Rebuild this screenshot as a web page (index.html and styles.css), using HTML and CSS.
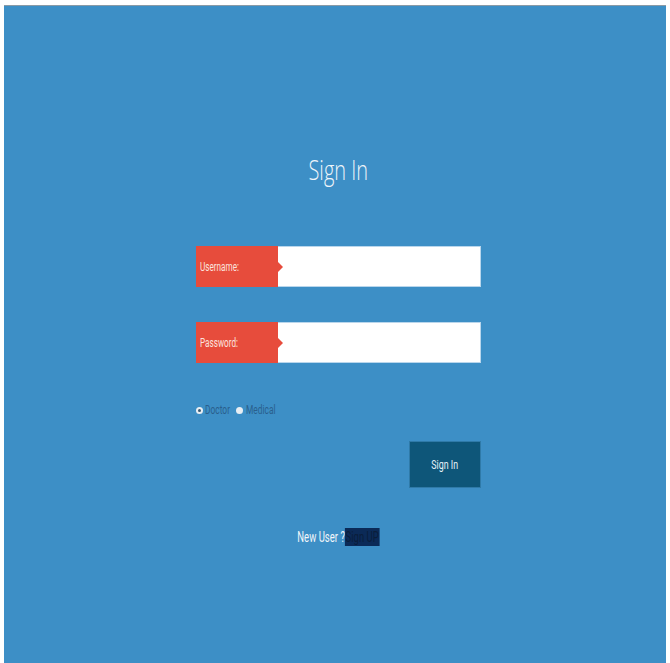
FILE: index.html
```html
<!DOCTYPE html>
<html>
<head>
<meta charset="utf-8">
<title>Sign In</title>
<link rel="stylesheet" href="styles.css">
</head>
<body>
<div class="page">
  <div class="panel">
    <h1 class="title">Sign In</h1>
    <form class="form">
      <div class="field">
        <label class="field-label" for="user"><span class="label-text">Username:</span></label>
        <input class="field-input" id="user" type="text">
      </div>
      <div class="field">
        <label class="field-label" for="pass"><span class="label-text">Password:</span></label>
        <input class="field-input" id="pass" type="password">
      </div>
      <div class="roles">
        <label class="role"><span class="radio checked"></span><span class="role-text role-doctor">Doctor</span></label>
        <label class="role"><span class="radio"></span><span class="role-text role-medical">Medical</span></label>
      </div>
      <div class="actions">
        <button class="submit" type="button"><span class="submit-text">Sign In</span></button>
      </div>
    </form>
    <p class="signup">New User ?<a class="signup-link" href="#">Sign UP</a></p>
  </div>
</div>
</body>
</html>
```

FILE: styles.css
```css
html, body {
  margin: 0;
  padding: 0;
  background: #ffffff;
}

.page {
  padding: 5px 4px 0 4px;
  height: 663px;
  box-sizing: border-box;
  overflow: hidden;
}

.panel {
  background: #3d8fc6;
  border-top: 1px solid #8a9aa6;
  height: 700px;
  display: flex;
  flex-direction: column;
  align-items: center;
  padding-left: 7px;
  font-family: "Roboto", sans-serif;
}

/* headline face is a light sans, drawn condensed */
.title {
  margin: 146px 0 0 0;
  font-family: "Open Sans", sans-serif;
  font-weight: 300;
  font-size: 27px;
  line-height: 36px;
  color: #eef4fa;
  transform: scaleX(0.74);
}

.form {
  width: 285px;
  margin-top: 58px;
  display: flex;
  flex-direction: column;
}

.field {
  display: flex;
  height: 41px;
  margin-bottom: 35px;
}

.field-label {
  position: relative;
  width: 82px;
  background: #e74c3c;
  color: #fbe3df;
  font-size: 12px;
  display: flex;
  align-items: center;
  padding-left: 4px;
  box-sizing: border-box;
}

.label-text {
  display: inline-block;
  white-space: nowrap;
  transform: scaleX(0.68);
  transform-origin: left center;
}

.field-label::after {
  content: "";
  position: absolute;
  right: -5px;
  top: 50%;
  margin-top: -5px;
  border-left: 5px solid #e74c3c;
  border-top: 5px solid transparent;
  border-bottom: 5px solid transparent;
}

.field-input {
  flex: 1;
  border: 1px solid #b9d6ec;
  border-left: none;
  background: #ffffff;
  margin: 0;
  padding: 0 10px;
  outline: none;
}

.roles {
  display: flex;
  align-items: center;
  gap: 6px;
  margin-top: 5px;
  height: 14px;
  color: #2a5f8d;
  font-size: 12px;
}

.role {
  display: flex;
  align-items: center;
  gap: 2px;
}

.role-text {
  display: inline-block;
  white-space: nowrap;
  transform: scaleX(0.7);
  transform-origin: left center;
}

.role-doctor { width: 25px; }
.role-medical { width: 30px; margin-left: 1px; }

.radio {
  width: 7px;
  height: 7px;
  border-radius: 50%;
  background: #e8eef3;
  position: relative;
}

.radio.checked::after {
  content: "";
  position: absolute;
  left: 2px;
  top: 2px;
  width: 3px;
  height: 3px;
  border-radius: 50%;
  background: #3b5a72;
}

.actions {
  display: flex;
  justify-content: flex-end;
  margin-top: 24px;
}

.submit {
  width: 72px;
  height: 47px;
  background: #0e5679;
  border: 1px solid #2f7aa8;
  color: #e6f2f8;
  font-family: "Roboto", sans-serif;
  font-size: 13px;
  padding: 0;
}

.submit-text {
  display: inline-block;
  transform: scaleX(0.68);
}

.signup {
  margin: 40px 0 0 0;
  color: #f2f6fa;
  font-size: 14px;
  line-height: 18px;
  display: flex;
  align-items: center;
  transform: scaleX(0.68);
}

.signup-link {
  background: #0b2a57;
  color: #0a1d3a;
  text-decoration: none;
  padding: 0 1px;
}
```
